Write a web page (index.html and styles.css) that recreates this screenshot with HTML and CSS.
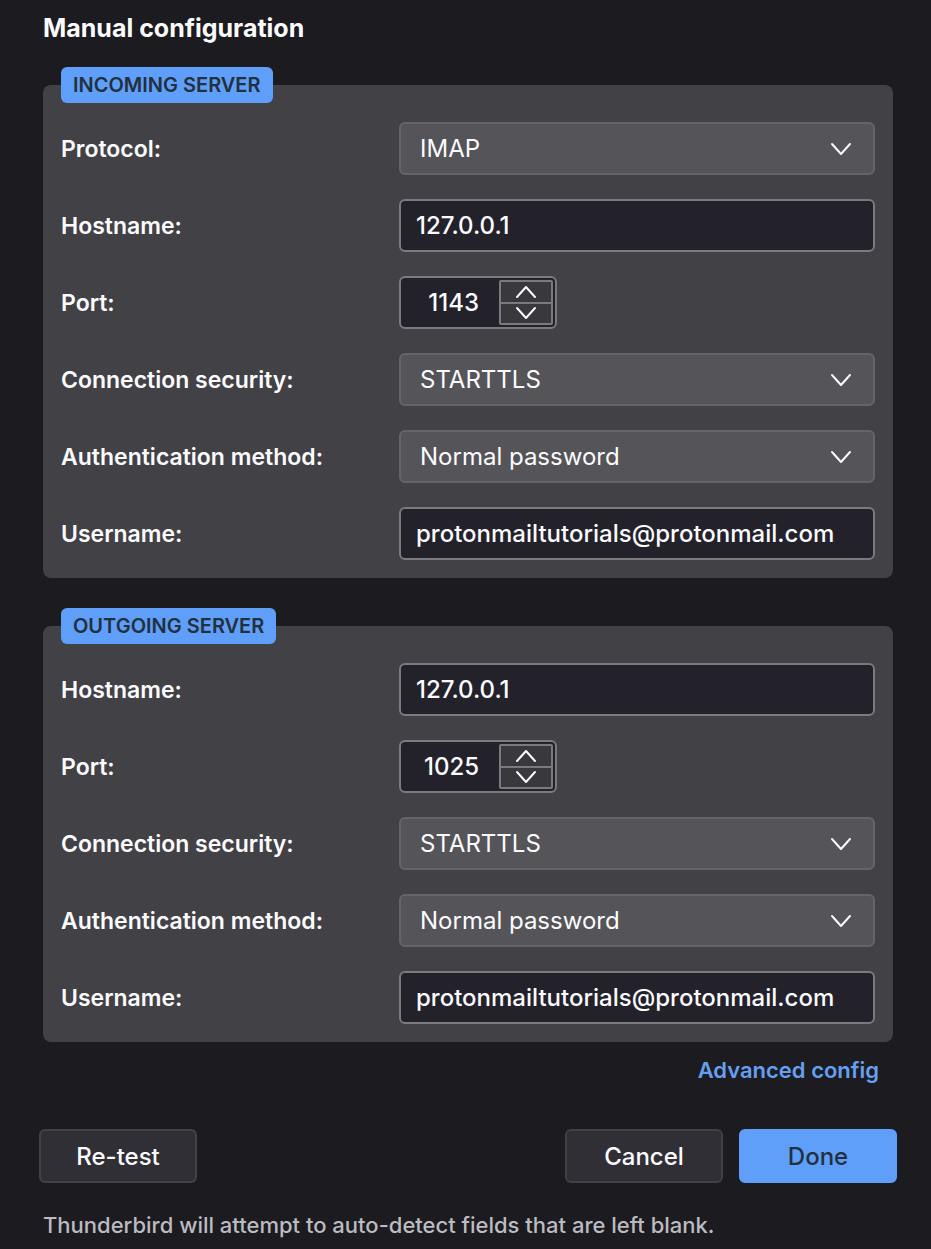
FILE: index.html
```html
<!DOCTYPE html>
<html lang="en">
<head>
<meta charset="utf-8">
<meta name="viewport" content="width=device-width, initial-scale=1">
<title>Manual configuration</title>
<link rel="stylesheet" href="styles.css">
</head>
<body>
<svg class="sprite" aria-hidden="true">
  <symbol id="down" viewBox="0 0 22 14"><path d="M2 2l9 10 9-10"/></symbol>
  <symbol id="up" viewBox="0 0 22 14"><path d="M2 12l9-10 9 10"/></symbol>
</svg>
<form class="page">
  <h1 class="title">Manual configuration</h1>

  <fieldset class="server">
    <legend class="legend">INCOMING SERVER</legend>
    <div class="rows">
      <label class="label" for="in-protocol">Protocol:</label>
      <div class="select-wrap">
        <select class="select" id="in-protocol"><option>IMAP</option><option>POP3</option></select>
        <svg class="icon select-icon" aria-hidden="true"><use href="#down"/></svg>
      </div>
      <label class="label" for="in-host">Hostname:</label>
      <input class="input" id="in-host" type="text" value="127.0.0.1">
      <label class="label" for="in-port">Port:</label>
      <div class="port">
        <input class="port-input" id="in-port" type="number" value="1143">
        <div class="spinner">
          <button class="step" type="button" aria-label="Increase incoming port"><svg class="icon" aria-hidden="true"><use href="#up"/></svg></button>
          <button class="step" type="button" aria-label="Decrease incoming port"><svg class="icon" aria-hidden="true"><use href="#down"/></svg></button>
        </div>
      </div>
      <label class="label" for="in-security">Connection security:</label>
      <div class="select-wrap">
        <select class="select" id="in-security"><option>STARTTLS</option><option>SSL/TLS</option></select>
        <svg class="icon select-icon" aria-hidden="true"><use href="#down"/></svg>
      </div>
      <label class="label" for="in-auth">Authentication method:</label>
      <div class="select-wrap">
        <select class="select" id="in-auth"><option>Normal password</option></select>
        <svg class="icon select-icon" aria-hidden="true"><use href="#down"/></svg>
      </div>
      <label class="label" for="in-user">Username:</label>
      <input class="input" id="in-user" type="text" value="protonmailtutorials@protonmail.com">
    </div>
  </fieldset>

  <fieldset class="server">
    <legend class="legend">OUTGOING SERVER</legend>
    <div class="rows">
      <label class="label" for="out-host">Hostname:</label>
      <input class="input" id="out-host" type="text" value="127.0.0.1">
      <label class="label" for="out-port">Port:</label>
      <div class="port">
        <input class="port-input" id="out-port" type="number" value="1025">
        <div class="spinner">
          <button class="step" type="button" aria-label="Increase outgoing port"><svg class="icon" aria-hidden="true"><use href="#up"/></svg></button>
          <button class="step" type="button" aria-label="Decrease outgoing port"><svg class="icon" aria-hidden="true"><use href="#down"/></svg></button>
        </div>
      </div>
      <label class="label" for="out-security">Connection security:</label>
      <div class="select-wrap">
        <select class="select" id="out-security"><option>STARTTLS</option><option>SSL/TLS</option></select>
        <svg class="icon select-icon" aria-hidden="true"><use href="#down"/></svg>
      </div>
      <label class="label" for="out-auth">Authentication method:</label>
      <div class="select-wrap">
        <select class="select" id="out-auth"><option>Normal password</option></select>
        <svg class="icon select-icon" aria-hidden="true"><use href="#down"/></svg>
      </div>
      <label class="label" for="out-user">Username:</label>
      <input class="input" id="out-user" type="text" value="protonmailtutorials@protonmail.com">
    </div>
  </fieldset>

  <div class="advanced"><a class="link" href="#advanced">Advanced config</a></div>

  <div class="actions">
    <button class="button" type="button">Re-test</button>
    <button class="button push" type="button">Cancel</button>
    <button class="button primary" type="submit">Done</button>
  </div>
  <p class="note">Thunderbird will attempt to auto-detect fields that are left blank.</p>
</form>
</body>
</html>
```
FILE: styles.css
```css
* {
  box-sizing: border-box;
}

body {
  margin: 0;
  background: #1c1b20;
  color: #fbfbfe;
  font-family: Inter, "Liberation Sans", sans-serif;
  font-size: 24px;
  line-height: 32px;
}

input,
select,
button {
  font: inherit;
  color: inherit;
  margin: 0;
}

.sprite {
  display: none;
}

.page {
  padding: 12px 34px 0 39px;
}

.title {
  margin: 0 4px 23px;
  font-size: 25px;
  line-height: 32px;
  font-weight: 700;
}

.server {
  min-width: 0;
  margin: 0 4px 30px;
  padding: 19px 18px 18px;
  border: 0;
  border-radius: 8px;
  background: #424145;
}

.server + .server {
  margin-bottom: 12px;
}

.legend {
  padding: 1px 12px 0;
  border-radius: 6px;
  background: #5f9ff9;
  color: #23303d;
  font-size: 20px;
  line-height: 35px;
  font-weight: 600;
}

.rows {
  display: grid;
  grid-template-columns: 338px minmax(0, 1fr);
  grid-auto-rows: 53px;
  row-gap: 24px;
}

.label {
  align-self: center;
  font-size: 23px;
  font-weight: 600;
}

.input,
.select,
.port {
  width: 100%;
  height: 100%;
  border: 2px solid #7a7a80;
  border-radius: 6px;
  background: #23222a;
}

.input {
  padding: 0 15px;
  font-weight: 500;
}

.select-wrap {
  display: grid;
  align-items: center;
}

.select-wrap > * {
  grid-area: 1 / 1;
}

.select {
  appearance: none;
  padding: 0 60px 0 19px;
  border-color: #656469;
  background: #555459;
}

.icon {
  width: 22px;
  height: 14px;
  fill: none;
  stroke: #fbfbfe;
  stroke-width: 2;
  stroke-linecap: round;
  stroke-linejoin: round;
}

.select-icon {
  justify-self: end;
  margin-right: 23px;
  pointer-events: none;
}

.port {
  display: flex;
  width: 158px;
  padding: 2px;
}

.port-input {
  flex: 1;
  min-width: 0;
  padding: 0 20px 0 0;
  border: 0;
  outline: 0;
  background: transparent;
  text-align: right;
  font-weight: 500;
  appearance: textfield;
}

.port-input::-webkit-inner-spin-button {
  appearance: none;
  margin: 0;
}

.spinner {
  display: grid;
  grid-template-rows: 1fr 1fr;
  row-gap: 2px;
  width: 54px;
  padding: 2px;
  border-radius: 2px;
  background: #7a7a80;
}

.step {
  display: grid;
  place-items: center;
  min-height: 0;
  padding: 0;
  border: 0;
  background: #38383d;
}

.advanced {
  display: flex;
  justify-content: flex-end;
  padding-right: 18px;
}

.link {
  color: #669ff0;
  font-size: 22px;
  font-weight: 600;
  text-decoration: none;
}

.actions {
  display: flex;
  gap: 16px;
  margin-top: 43px;
}

.button {
  width: 158px;
  height: 54px;
  padding: 1px 0 0;
  border: 2px solid #424147;
  border-radius: 6px;
  background: #312f36;
  font-weight: 500;
}

.push {
  margin-left: auto;
}

.primary {
  border-color: #5f9ff9;
  background: #5f9ff9;
  color: #23303d;
}

.note {
  margin: 26px 4px 0;
  color: #bbbbc0;
  font-size: 22px;
  font-weight: 500;
}
```
